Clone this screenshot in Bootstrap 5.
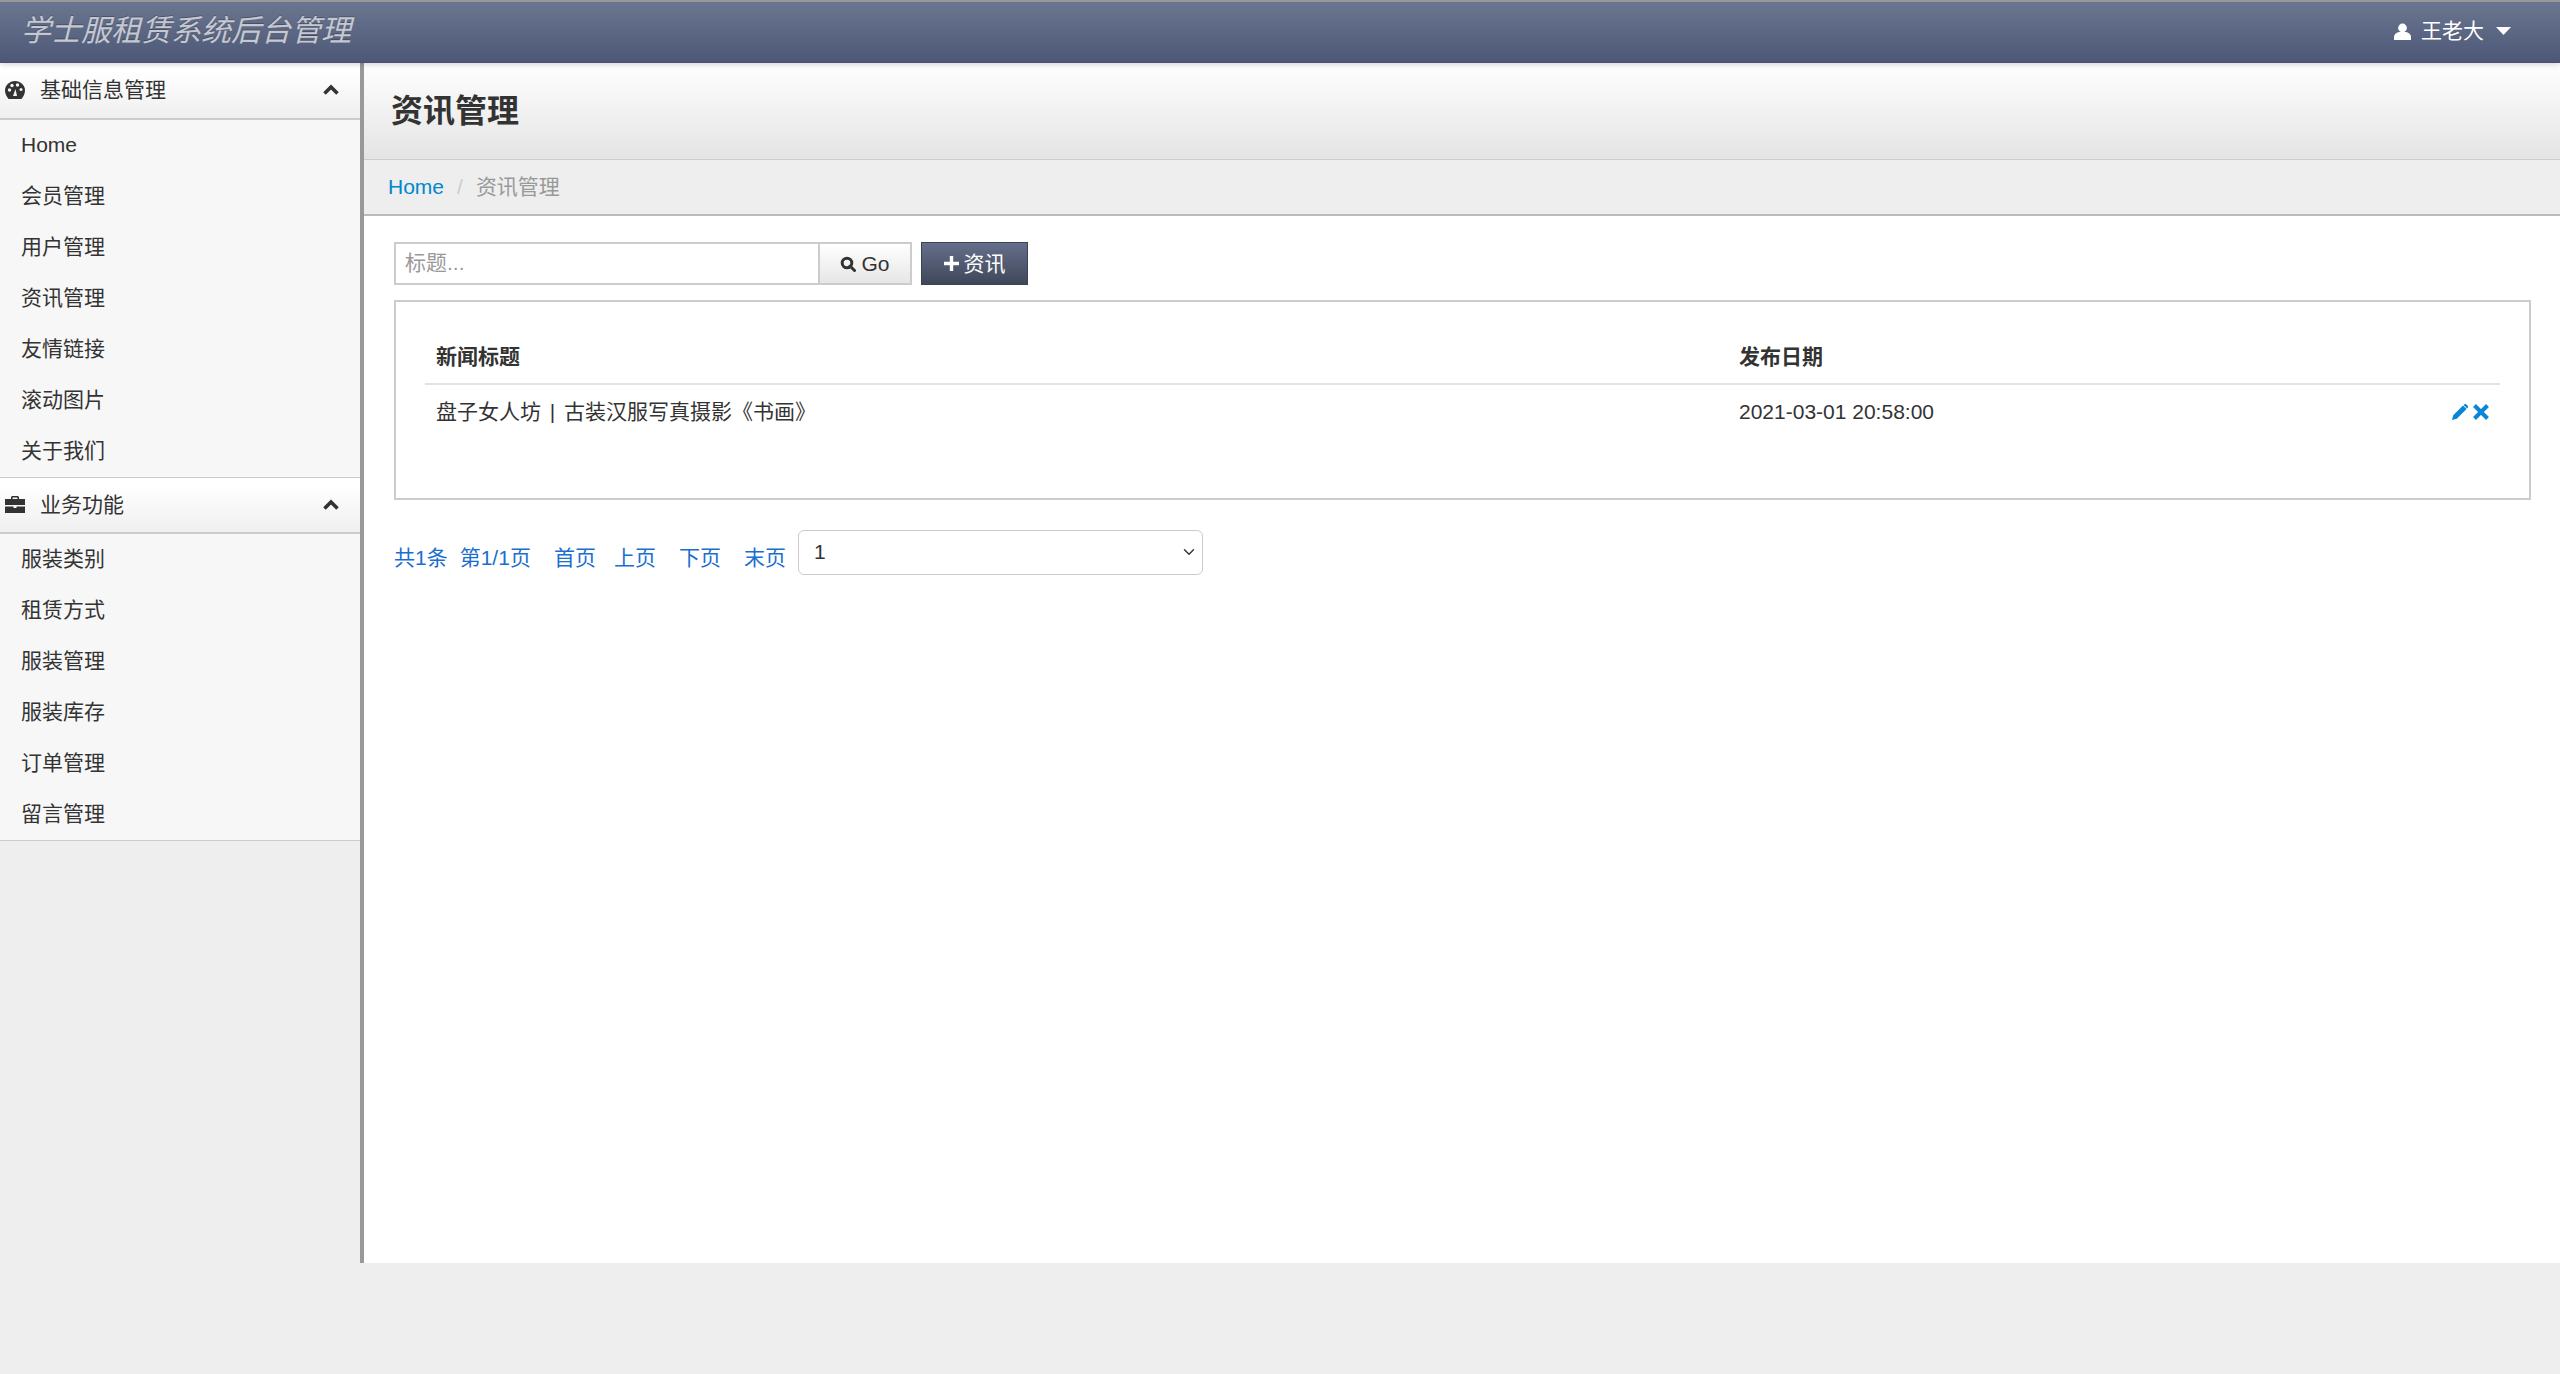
<!DOCTYPE html>
<html lang="zh">
<head>
<meta charset="utf-8">
<title>学士服租赁系统后台管理</title>
<link href="https://cdn.jsdelivr.net/npm/bootstrap@5.3.0/dist/css/bootstrap.min.css" rel="stylesheet">
<style>
html,body{height:100%}
body{background:#eee;font:21px/1.5 "Liberation Sans","Noto Sans CJK SC",sans-serif;color:#333;overflow:hidden}
svg{display:block;flex:none}
.topbar{height:63px;padding:0 49px 2px 21px;background:linear-gradient(#6b7690,#4d5877);border-top:2px solid #999;border-bottom:1px solid #4a5270;box-shadow:0 1px 6px rgba(0,0,0,.2)}
.brandname{font-size:30px;font-style:italic;color:#c5c8d0;line-height:1;text-shadow:0 -1px 0 rgba(0,0,0,.25)}
.userlink{color:#fff;font-size:21px}
.shell{height:1200px}
.sidebox{width:364px;flex:none;border-right:4px solid #999;background:#eee}
.sidehead{height:56px;padding:0 21px 1px 5px;background:linear-gradient(#fff 15%,#efefef);border-bottom:2px solid #ccc;color:#333}
.sidehead.firsthead{height:57px;padding-bottom:2px}
.sidehead .lbl{margin-left:15px}
.sidegroup{background:#f7f7f7;border-bottom:1px solid #ccc}
.sidegroup a{display:block;height:51px;line-height:50px;padding:0 0 0 21px;color:#333;text-decoration:none;background:transparent;border:0;border-radius:0}
.pagehead{height:97px;padding:0 0 0 27px;background:linear-gradient(#fff,#e4e4e4);border-bottom:1px solid #ccc}
.pagehead h1{font-size:32px;font-weight:700;margin:0;color:#333;line-height:1}
.crumbs{height:56px;margin:0;padding:0 0 0 24px;background:#eee;border-bottom:2px solid #bbb;font-size:21px;--bs-breadcrumb-divider-color:#ccc;--bs-breadcrumb-item-active-color:#999;--bs-breadcrumb-item-padding-x:13px}
.crumbs a{color:#08c;text-decoration:none}
.workarea{padding:26px 29px 0 30px}
.searchgrp{width:519px;height:43px;flex-wrap:nowrap}
.searchgrp .form-control{width:426px;flex:none;height:43px;font-size:21px;padding:0 9px 1px;border:2px solid #ccc;border-radius:0;color:#333}
.searchgrp .form-control::placeholder{color:#999}
.gobtn{width:93px;height:43px;padding:0;font-size:21px;color:#333;background:linear-gradient(#fff,#e6e6e6);border:2px solid #ccc;border-left-width:1px;border-radius:0}
.addbtn{width:107px;height:43px;padding:0;margin-left:8px;font-size:21px;color:#fff;background:linear-gradient(#656f8b,#3f4759);border:1px solid #3b4356;border-radius:0}
.tablebox{height:200px;margin-top:15px;padding:30px 29px 0 29px;border:2px solid #ccc;background:#fff}
.tablebox .table{margin:0;font-size:21px;color:#333;--bs-table-color:#333;table-layout:fixed}
.tablebox th{height:52px;padding:0 11px 2px;vertical-align:middle;border-bottom:2px solid #e3e3e3}
.tablebox td{height:54px;padding:0 11px;vertical-align:middle;border:0}
.newstitle{word-spacing:3px}
.c-date{width:672px}
.c-act{width:100px}
.acts{color:#0a86d6}
.pagerrow{margin-top:29px;height:46px}
.pagerrow a{color:#1a6ecf;text-decoration:none;position:relative;top:6px;white-space:nowrap}
.pagerrow .form-select{width:405px;height:45px;font-size:21px;padding:0 40px 0 15px;margin-left:12px;color:#333;border:1px solid #ccc;background-position:right 5px center}
</style>
</head>
<body>
<nav class="navbar topbar d-flex align-items-center justify-content-between flex-nowrap">
  <span class="brandname">学士服租赁系统后台管理</span>
  <a class="userlink d-flex align-items-center text-decoration-none" href="#">
    <svg width="17" height="17" viewBox="0 0 17 17" fill="#fff"><circle cx="8.5" cy="5" r="4.4"/><path d="M0 17v-3c0-3 3-4.500 5-5h7c2 .5 5 2 5 5v3z"/></svg>
    <span style="margin-left:10px">王老大</span>
    <svg style="margin-left:12px" width="15" height="8" viewBox="0 0 15 8" fill="#fff"><path d="M0 0h15L7.500 8z"/></svg>
  </a>
</nav>
<div class="shell d-flex">
  <aside class="sidebox">
    <div class="sidehead firsthead d-flex align-items-center">
      <svg width="20" height="18" viewBox="0 0 20 18"><path d="M10 0c5.500 0 10 4.300 10 9.500 0 3.300-1.500 6-3.500 8.500h-13C1.500 15.500 0 12.800 0 9.500 0 4.300 4.500 0 10 0z" fill="#333"/><circle cx="4.500" cy="9" r="1.700" fill="#f5f5f5"/><circle cx="7" cy="4.500" r="1.700" fill="#f5f5f5"/><circle cx="12.500" cy="4" r="1.700" fill="#f5f5f5"/><circle cx="16" cy="8.500" r="1.500" fill="#f5f5f5"/><path d="M8 15l2.500-7 1.500 7z" fill="#f5f5f5"/></svg>
      <span class="lbl flex-grow-1">基础信息管理</span>
      <svg width="16" height="11" viewBox="0 0 16 11" fill="none" stroke="#333" stroke-width="3.600"><path d="M1.500 9.500L8 3l6.500 6.500"/></svg>
    </div>
    <div class="list-group list-group-flush sidegroup">
      <a class="list-group-item" href="#">Home</a>
      <a class="list-group-item" href="#">会员管理</a>
      <a class="list-group-item" href="#">用户管理</a>
      <a class="list-group-item" href="#">资讯管理</a>
      <a class="list-group-item" href="#">友情链接</a>
      <a class="list-group-item" href="#">滚动图片</a>
      <a class="list-group-item" href="#">关于我们</a>
    </div>
    <div class="sidehead d-flex align-items-center">
      <svg width="20" height="17" viewBox="0 0 20 17" fill="#333"><path d="M6 3V1.500C6 .7 6.700 0 7.500 0h5c.8 0 1.500.7 1.500 1.500V3h6v6H0V3zm1.600 0h4.800V1.600H7.600zM0 10.500h8.500V12h3v-1.500H20V17H0z"/></svg>
      <span class="lbl flex-grow-1">业务功能</span>
      <svg width="16" height="11" viewBox="0 0 16 11" fill="none" stroke="#333" stroke-width="3.600"><path d="M1.500 9.500L8 3l6.500 6.500"/></svg>
    </div>
    <div class="list-group list-group-flush sidegroup">
      <a class="list-group-item" href="#">服装类别</a>
      <a class="list-group-item" href="#">租赁方式</a>
      <a class="list-group-item" href="#">服装管理</a>
      <a class="list-group-item" href="#">服装库存</a>
      <a class="list-group-item" href="#">订单管理</a>
      <a class="list-group-item" href="#">留言管理</a>
    </div>
  </aside>
  <main class="flex-grow-1 bg-white">
    <div class="pagehead d-flex align-items-center"><h1>资讯管理</h1></div>
    <ol class="breadcrumb crumbs align-items-center">
      <li class="breadcrumb-item"><a href="#">Home</a></li>
      <li class="breadcrumb-item active">资讯管理</li>
    </ol>
    <div class="workarea">
      <div class="d-flex align-items-center">
        <div class="input-group searchgrp">
          <input class="form-control" type="text" placeholder="标题...">
          <button class="btn gobtn d-flex align-items-center justify-content-center" type="button">
            <svg width="16" height="16" viewBox="0 0 16 16" fill="none" stroke="#333" stroke-width="3"><circle cx="7" cy="7" r="4.800"/><path d="M10 10l4.500 4.500" stroke-linecap="round"/></svg>
            <span style="margin-left:5px">Go</span>
          </button>
        </div>
        <button class="btn addbtn d-flex align-items-center justify-content-center" type="button">
          <svg width="15" height="15" viewBox="0 0 15 15" fill="#fff"><path d="M5.800 0h3.400v5.800H15v3.400H9.200V15H5.800V9.200H0V5.800h5.800z"/></svg>
          <span style="margin-left:5px">资讯</span>
        </button>
      </div>
      <div class="tablebox">
        <table class="table">
          <thead><tr><th>新闻标题</th><th class="c-date">发布日期</th><th class="c-act"></th></tr></thead>
          <tbody><tr>
            <td class="newstitle">盘子女人坊 | 古装汉服写真摄影《书画》</td>
            <td>2021-03-01 20:58:00</td>
            <td>
              <div class="acts d-flex justify-content-end align-items-center" style="gap:5px">
                <svg width="16" height="16" viewBox="0 0 16 16" fill="#0a86d6"><path d="M0 16l1.200-4.800L11 1.400l3.600 3.600L4.800 14.800zM12 .5c.7-.7 1.700-.7 2.400 0l1.100 1.100c.7.7.7 1.700 0 2.400l-.4.400L11.600.9z"/></svg>
                <svg width="16" height="16" viewBox="0 0 16 16" fill="none" stroke="#0a86d6" stroke-width="4"><path d="M1.500 1.500l13 13M14.500 1.500l-13 13"/></svg>
              </div>
            </td>
          </tr></tbody>
        </table>
      </div>
      <div class="pagerrow d-flex align-items-center">
        <a href="#">共1条</a>
        <a href="#" style="margin-left:12px">第1/1页</a>
        <a href="#" style="margin-left:23px">首页</a>
        <a href="#" style="margin-left:18px">上页</a>
        <a href="#" style="margin-left:23px">下页</a>
        <a href="#" style="margin-left:23px">末页</a>
        <select class="form-select"><option>1</option></select>
      </div>
    </div>
  </main>
</div>
<script src="https://cdn.jsdelivr.net/npm/bootstrap@5.3.0/dist/js/bootstrap.bundle.min.js"></script>
</body>
</html>
